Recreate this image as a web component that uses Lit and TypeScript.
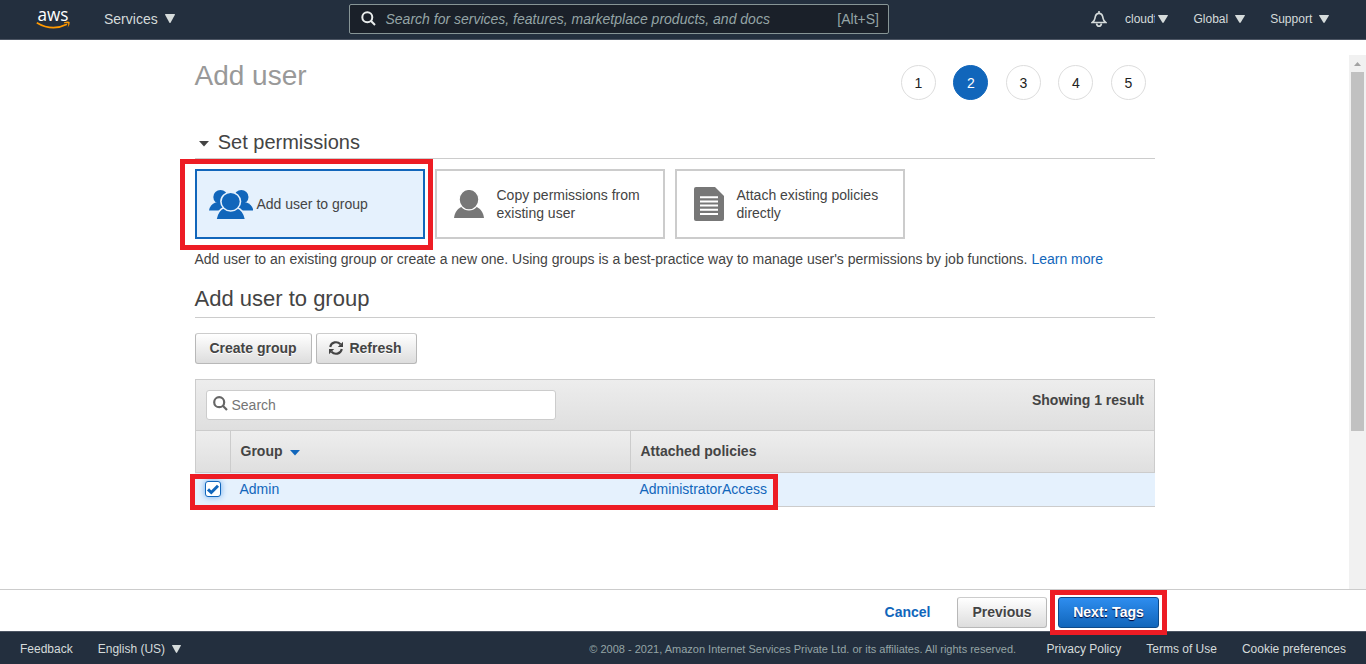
import { LitElement, html, css, svg } from "lit";
import { customElement, property, state } from "lit/decorators.js";
import { classMap } from "lit/directives/class-map.js";

const caret = (w = 10, h = 8) =>
  html`<svg class="caret" width=${w} height=${h} viewBox="0 0 10 8" preserveAspectRatio="none">${svg`<path d="M.5 0H9.500Q10.200 0 9.800 .8L5.700 7.500Q5 8.400 4.300 7.500L.2 .8Q-.2 0 .5 0Z" fill="currentColor"/>`}</svg>`;

const groupIcon = html`<svg width="44" height="29" viewBox="0 0 44 29">
  <g fill="#1166bb">
    <ellipse cx="11.500" cy="7" rx="7.200" ry="7" /><path d="M0 20.500Q1 14.800 6.500 12.600L16 13V20.500Z" />
    <ellipse cx="32.300" cy="7" rx="7.200" ry="7" /><path d="M44.400 20.500Q43.200 14.800 37.500 12.600L28 13V20.500Z" />
  </g>
  <g fill="#1166bb" stroke="#e5f1fd" stroke-width="1.6">
    <path d="M6.800 30Q8.500 20.200 15 17.600H28Q35 20.200 36.700 30Z" />
    <ellipse cx="21.700" cy="11.600" rx="9.800" ry="9.400" />
  </g>
</svg>`;

const userIcon = html`<svg width="30" height="28" viewBox="0 0 30 28">
  <path d="M0 28C.8 22 4 18 9 16.300H21C26 18 29.200 22 30 28Z" fill="#777" />
  <ellipse cx="15" cy="9.600" rx="9.900" ry="10.300" fill="#777" stroke="#fff" stroke-width="1.300" />
</svg>`;

const documentIcon = html`<svg width="30" height="34" viewBox="0 0 30 34">
  <path d="M2 0H21L30 9V32a2 2 0 0 1-2 2H2a2 2 0 0 1-2-2V2a2 2 0 0 1 2-2Z" fill="#777" />
  <path d="M6 10.200H24M6 14.400H24M6 18.600H24M6 22.800H24M6 27H24" stroke="#fff" stroke-width="2" />
</svg>`;

@customElement("top-bar")
class TopBar extends LitElement {
  static styles = css`
    :host { box-sizing: border-box; display: flex; align-items: center; height: 40px; padding-bottom: 2px; border-bottom: 1px solid #4c5563;
      background: #232f3e; color: #d5dbdb; font-size: 12px; line-height: 16px; white-space: nowrap; }
    .logo { flex: none; margin-left: 36px; width: 35px; height: 24px; overflow: visible; }
    .services { display: flex; align-items: center; gap: 7px; margin-left: 33px; width: 245px; font-size: 14px; }
    .search { box-sizing: border-box; display: flex; align-items: center; width: 540px; height: 30px;
      padding: 0 9px 0 11px; border: 1px solid #879596; border-radius: 2px; background: #1a2029;
      color: #95a5a6; font-size: 14px; }
    .query { margin-left: 9.500px; font-style: italic; }
    .key { margin-left: auto; }
    .bell { margin-left: 202px; }
    .item { display: flex; align-items: center; gap: 7px; }
    .account { margin-left: 18px; gap: 3px; }
    .name { width: 30px; overflow: hidden; }
    .region { margin-left: 25.500px; }
    .support { margin-left: 25px; }
    svg { display: block; flex: none; }
  `;
  render() {
    return html`
      <svg class="logo" viewBox="0 0 35 24">
        <text x="1.500" y="13.500" textLength="31" lengthAdjust="spacingAndGlyphs" fill="#fff"
          font-family="Open Sans, sans-serif" font-weight="500" font-size="19">aws</text>
        <path d="M.8 15.700Q16 24.800 31 17.300" fill="none" stroke="#f90" stroke-width="1.700" />
        <path d="M28 15.300Q32.500 14 33.700 15.200Q34 18 31.500 20.800Q32.600 18 32.200 16.400Q31 15.700 28 16.200Z" fill="#f90" />
      </svg>
      <div class="services"><span>Services</span>${caret(10, 9)}</div>
      <div class="search">
        <svg width="15" height="15" viewBox="0 0 15 15" fill="none" stroke="#eaeded" stroke-width="2">
          <circle cx="6.300" cy="6.300" r="5" /><path d="M9.800 9.800L14 14" />
        </svg>
        <span class="query">Search for services, features, marketplace products, and docs</span>
        <span class="key">[Alt+S]</span>
      </div>
      <svg class="bell" width="16" height="16" viewBox="0 0 16 16" fill="none" stroke="#d5dbdb" stroke-width="1.600">
        <path d="M1.300 11.500C4 9.500 3.700 8.500 4.200 6C4.800 3.500 6 2.400 8 2.400S11.200 3.500 11.800 6C12.300 8.500 12 9.500 14.700 11.500Z" />
        <path d="M8 0V2M5.500 12.500Q6 15.200 8 15.200T10.500 12.500" />
      </svg>
      <div class="item account"><span class="name">cloudf</span>${caret(10, 8)}</div>
      <div class="item region"><span>Global</span>${caret(10, 8)}</div>
      <div class="item support"><span>Support</span>${caret(10, 8)}</div>
    `;
  }
}

@customElement("step-list")
class StepList extends LitElement {
  @property({ type: Number }) current = 2;
  static styles = css`
    :host { display: flex; gap: 17.5px; }
    .step { box-sizing: border-box; width: 35px; height: 35px; border: 1px solid #ddd; border-radius: 50%;
      text-align: center; font-size: 14px; line-height: 34px; color: #222; background: #fff; }
    .current { border-color: #1166bb; background: #1166bb; color: #fff; }
  `;
  render() {
    return [1, 2, 3, 4, 5].map(
      (n) => html`<div class=${classMap({ step: true, current: n === this.current })}>${n}</div>`
    );
  }
}

@customElement("app-root")
class AppRoot extends LitElement {
  @state() checked = true;
  static styles = css`
    :host { position: relative; display: flex; flex-direction: column; height: 664px; overflow: hidden;
      background: #fff; color: #444; font: 14px/18px "Liberation Sans", Arial, sans-serif; white-space: nowrap; }
    svg { display: block; flex: none; }
    .body { display: flex; flex: 1; min-height: 0; }
    .page { width: 960px; margin-left: 195px; margin-right: auto; }
    .title-row { display: flex; justify-content: space-between; height: 90px; }
    .title { margin: 19px 0 0 -.5px; font-size: 28px; line-height: 34px; font-weight: 400; color: #999; }
    .steps { margin: 25px 9.200px 0 0; }
    .section { box-sizing: border-box; display: flex; align-items: center; height: 29px; margin: 0;
      border-bottom: 1px solid #ccc; font-size: 20px; font-weight: 400; gap: 8.700px; padding: 0 0 4px 4px; }
    .section svg { margin-top: 4px; }
    .cards { display: flex; gap: 10px; margin-top: 10px; }
    .card { box-sizing: border-box; display: flex; align-items: center; width: 230px; height: 70px;
      padding-left: 17px; border: 2px solid #ccc; gap: 12.500px; }
    .selected { border-color: #1166bb; background: #e5f1fd; padding-left: 12px; gap: 3.500px; }
    .about { margin: 11px 0 0 -.5px; }
    .link { color: #1166bb; }
    .subhead { box-sizing: border-box; height: 39px; margin: 11px 0 0; padding: 7px 0 0; text-indent: -.5px;
      border-bottom: 1px solid #ccc; font-size: 22px; line-height: 26px; font-weight: 400; }
    .buttons { display: flex; gap: 4px; margin-top: 15px; }
    .btn { box-sizing: border-box; display: flex; align-items: center; justify-content: center; gap: 6px;
      height: 31px; border: 1px solid #b8b8b8; border-top-color: #ccc; border-radius: 3px;
      background: linear-gradient(#fff, #ddd); font-weight: 700; color: #444; text-shadow: 0 1px #fff; padding-bottom: 1px; }
    .create { width: 117px; padding-right: 1px; }
    .refresh { width: 101px; padding-right: 2px; }
    .table { margin-top: 15px; }
    .tools { box-sizing: border-box; display: flex; justify-content: space-between; height: 51px;
      padding: 10px 10px 0; border: 1px solid #ccc; border-bottom: 0; background: linear-gradient(#ededed, #dfdfdf); }
    .find { box-sizing: border-box; display: flex; width: 350px; height: 30px; padding: 5px 6px; gap: 3.500px;
      border: 1px solid #ccc; border-radius: 3px; background: #fff; color: #757575; line-height: 19px; }
    .count { margin-top: 1px; font-weight: 700; }
    .row { display: grid; grid-template-columns: 34px 400px 1fr; }
    .head { box-sizing: border-box; height: 43px; border: 1px solid #ccc; background: linear-gradient(#eee, #dfdfdf);
      font-weight: 700; line-height: 41px; }
    .head .cell + .cell { border-left: 1px solid #ccc; padding-left: 9.500px; }
    .group { display: flex; align-items: center; gap: 7.500px; }
    .group svg { margin-top: 2px; }
    .data { box-sizing: border-box; height: 34px; border-bottom: 1px solid #ccc; background: #e5f1fd; line-height: 32px;
      grid-template-columns: 35px 400px 1fr; color: #1166bb; }
    .data .cell { padding-left: 9.500px; }
    .data .pick { padding-left: 10px; }
    .check { box-sizing: border-box; width: 16px; height: 16px; margin: 8px 0 0; border: 1px solid #1166bb;
      border-radius: 3px; background: #fff; box-shadow: 0 0 6px #6cacef; }
    .bar { box-sizing: border-box; width: 17px; margin-top: 15px; padding: 7px 2px 0; background: #f1f1f1; }
    .up { margin: 0 auto 6px; }
    .thumb { height: 359px; background: #c1c1c1; }
    .actions { box-sizing: border-box; display: flex; align-items: flex-start; justify-content: flex-end; height: 42px;
      padding: 7px 207px 0 0; border-top: 1px solid #ccc; }
    .cancel { margin: 6px 26.500px 0 0; font-weight: 700; }
    .previous { width: 90px; margin-right: 11px; }
    .next { width: 101px; border-color: #0c4a8a; background: linear-gradient(#2e8def, #1166bb); color: #fff; text-shadow: 0 1px 1px #003; }
    .footer { box-sizing: border-box; display: flex; align-items: center; height: 33px; padding: 2px 20px 0;
      border-top: 1px solid #4c5563; background: #232f3e; color: #d5dbdb; font-size: 12px; }
    .lang { display: flex; align-items: center; gap: 7px; margin-left: 25px; }
    .copy { margin-left: auto; margin-right: 30.500px; font-size: 11px; color: #95a5a6; }
    .terms { margin: 0 25px; }
    .mark { position: absolute; box-sizing: border-box; border: 5px solid #ed1c24; pointer-events: none; }
    .mark-card { left: 180px; top: 159px; width: 253px; height: 91px; }
    .mark-row { left: 190px; top: 474px; width: 588px; height: 36px; }
    .mark-next { left: 1050px; top: 590px; width: 117px; height: 45px; }
  `;
  private toggle() {
    this.checked = !this.checked;
  }
  render() {
    return html`
      <top-bar></top-bar>
      <div class="body">
        <main class="page">
          <div class="title-row">
            <h1 class="title">Add user</h1>
            <step-list class="steps" .current=${2}></step-list>
          </div>
          <h2 class="section">
            <svg width="10" height="6" viewBox="0 0 10 6"><path d="M0 0H10L5 5.500Z" fill="#444" /></svg>
            <span>Set permissions</span>
          </h2>
          <div class="cards">
            <div class="card selected">${groupIcon}<span>Add user to group</span></div>
            <div class="card">${userIcon}<span>Copy permissions from<br />existing user</span></div>
            <div class="card">${documentIcon}<span>Attach existing policies<br />directly</span></div>
          </div>
          <div class="about">
            Add user to an existing group or create a new one. Using groups is a best-practice way to manage user's permissions by job functions.
            <span class="link">Learn more</span>
          </div>
          <h2 class="subhead">Add user to group</h2>
          <div class="buttons">
            <div class="btn create">Create group</div>
            <div class="btn refresh">
              <svg width="14" height="14" viewBox="0 0 14 14">
                <g fill="none" stroke="#444" stroke-width="2.100">
                  <path d="M1.200 6C2.200 .8 8.300 -.2 11.500 3.200M12.800 8C11.800 13.200 5.700 14.200 2.500 10.800" />
                </g>
                <path d="M14 .8V6H8.800ZM0 13.200V8H5.200Z" fill="#444" />
              </svg>
              <span>Refresh</span>
            </div>
          </div>
          <div class="table">
            <div class="tools">
              <div class="find">
                <svg width="15" height="15" viewBox="0 0 15 15" fill="none" stroke="#666" stroke-width="2.200">
                  <circle cx="6.200" cy="6.200" r="5" /><path d="M9.800 9.800L14 14" />
                </svg>
                <span>Search</span>
              </div>
              <span class="count">Showing 1 result</span>
            </div>
            <div class="row head">
              <div class="cell"></div>
              <div class="cell group">
                <span>Group</span>
                <svg width="10" height="6" viewBox="0 0 10 6"><path d="M0 0H10L5 5.500Z" fill="#1166bb" /></svg>
              </div>
              <div class="cell">Attached policies</div>
            </div>
            <div class="row data">
              <div class="cell pick">
                <div class="check" @click=${this.toggle}>
                  ${this.checked
                    ? html`<svg width="14" height="14" viewBox="0 0 14 14"><path d="M2 7.300L5.300 10.500L12 3.700" fill="none" stroke="#1166bb" stroke-width="3" /></svg>`
                    : null}
                </div>
              </div>
              <div class="cell">Admin</div>
              <div class="cell">AdministratorAccess</div>
            </div>
          </div>
        </main>
        <div class="bar">
          <svg class="up" width="7" height="4" viewBox="0 0 7 4"><path d="M0 4L3.500 0L7 4Z" fill="#a3a3a3" /></svg>
          <div class="thumb"></div>
        </div>
      </div>
      <div class="actions">
        <span class="cancel link">Cancel</span>
        <div class="btn previous">Previous</div>
        <div class="btn next">Next: Tags</div>
      </div>
      <footer class="footer">
        <span>Feedback</span>
        <span class="lang"><span>English (US)</span>${caret(9, 8)}</span>
        <span class="copy">© 2008 - 2021, Amazon Internet Services Private Ltd. or its affiliates. All rights reserved.</span>
        <span>Privacy Policy</span>
        <span class="terms">Terms of Use</span>
        <span>Cookie preferences</span>
      </footer>
      <div class="mark mark-card"></div>
      <div class="mark mark-row"></div>
      <div class="mark mark-next"></div>
    `;
  }
}
